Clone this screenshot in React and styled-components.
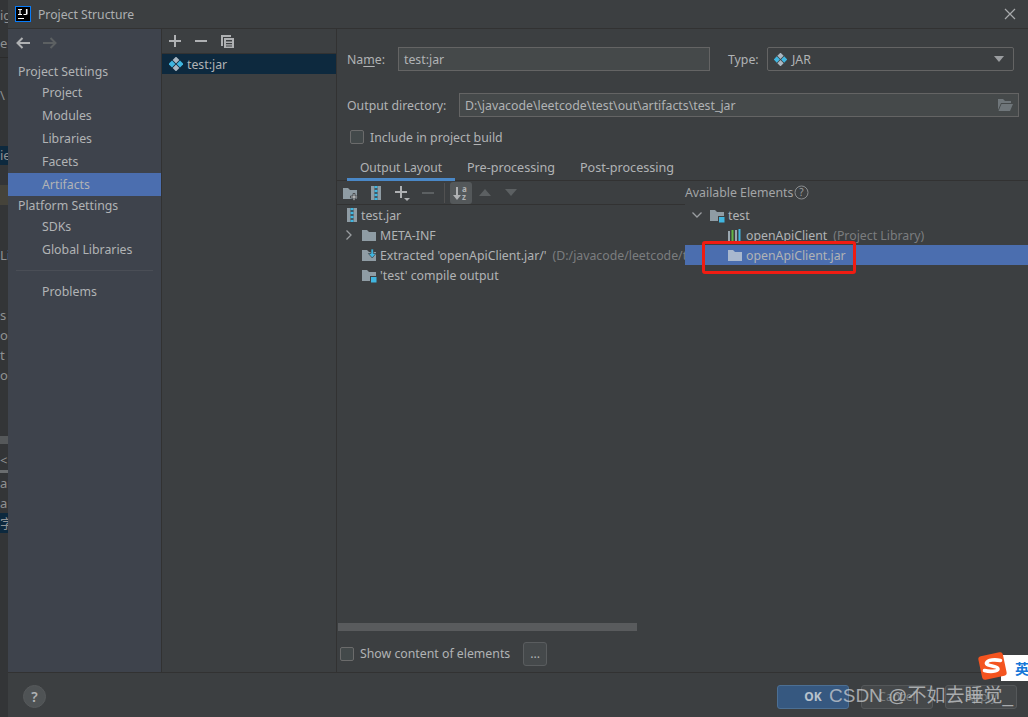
import React from 'react';
import styled, { createGlobalStyle } from 'styled-components';

const GlobalStyle = createGlobalStyle`
  html, body { margin: 0; padding: 0; background: #3c3f41; }
  * { box-sizing: border-box; }
  svg { flex: none; }
`;

const Page = styled.div`
  position: relative;
  width: 1028px;
  height: 717px;
  overflow: hidden;
  display: flex;
  font-family: "Noto Sans", "Noto Sans CJK SC", sans-serif;
  font-size: 12.3px;
  color: #b1b3b5;
  background: #3c3f41;
`;

const Strip = styled.div`
  width: 8px;
  flex: none;
  display: flex;
  flex-direction: column;
  background: #333537;
  overflow: hidden;
  font-size: 13px;
  color: #8f9193;
`;

const StripRow = styled.div`
  height: ${p => p.$h}px;
  flex: none;
  line-height: ${p => p.$h}px;
  white-space: nowrap;
  background: ${p => p.$bg || 'transparent'};
`;

const Dialog = styled.div`
  flex: 1;
  min-width: 0;
  display: flex;
  flex-direction: column;
`;

const TitleBar = styled.div`
  height: 29px;
  flex: none;
  display: flex;
  align-items: center;
  padding: 0 12px 0 7px;
  border-bottom: 1px solid #323232;
  color: #adafb1;
`;

const Title = styled.span`
  margin-left: 7px;
  flex: 1;
  font-size: 12.2px;
`;

const Body = styled.div`
  flex: 1;
  min-height: 0;
  display: flex;
`;

const Sidebar = styled.div`
  width: 153px;
  flex: none;
  background: #3e434c;
  display: flex;
  flex-direction: column;
`;

const NavBar = styled.div`
  height: 27px;
  flex: none;
  display: flex;
  align-items: center;
  gap: 13px;
  padding-left: 8px;
`;

const SideHeading = styled.div`
  height: ${p => p.$h}px;
  flex: none;
  padding: ${p => p.$pad || 0}px 0 0 10px;
  line-height: ${p => p.$h - (p.$pad || 0)}px;
`;

const SideItem = styled.div`
  height: 23px;
  flex: none;
  padding-left: 34px;
  line-height: 23px;
  background: ${p => (p.$active ? '#4b6eaf' : 'transparent')};
`;

const SideSeparator = styled.div`
  height: 1px;
  flex: none;
  margin: 9px 8px;
  background: #4a4e56;
`;

const ListPanel = styled.div`
  width: 176px;
  flex: none;
  display: flex;
  flex-direction: column;
  border-left: 1px solid #323232;
  border-right: 1px solid #323232;
`;

const ListToolbar = styled.div`
  height: 25px;
  flex: none;
  display: flex;
  align-items: center;
  gap: 10px;
  padding-left: 5px;
  border-bottom: 1px solid #323232;
`;

const ListRow = styled.div`
  height: 20px;
  flex: none;
  display: flex;
  align-items: center;
  gap: 4px;
  padding-left: 7px;
  background: #0d293e;
`;

const Editor = styled.div`
  flex: 1;
  min-width: 0;
  display: flex;
  flex-direction: column;
`;

const FormRow = styled.div`
  height: 24px;
  flex: none;
  display: flex;
  align-items: center;
  margin-top: ${p => p.$top}px;
  padding-left: 10px;
`;

const FieldLabel = styled.span`
  width: ${p => p.$w}px;
  flex: none;
  margin-left: ${p => p.$left || 0}px;
`;

const Input = styled.div`
  width: ${p => p.$w}px;
  height: 24px;
  flex: none;
  display: flex;
  align-items: center;
  justify-content: space-between;
  padding: 0 5px;
  background: #45494a;
  border: 1px solid #646464;
`;

const Combo = styled.div`
  width: 247px;
  height: 24px;
  flex: none;
  display: flex;
  align-items: center;
  gap: 5px;
  padding: 0 9px 0 6px;
  background: #3c3f41;
  border: 1px solid #646464;
  border-radius: 2px;
`;

const ComboCaret = styled.span`
  margin-left: auto;
  width: 0;
  height: 0;
  border-left: 5px solid transparent;
  border-right: 5px solid transparent;
  border-top: 6px solid #9a9da0;
`;

const Mnemonic = styled.span`
  text-decoration: underline;
  text-underline-offset: 2px;
`;

const Box = styled.span`
  width: 14px;
  height: 14px;
  flex: none;
  background: #43494a;
  border: 1px solid #6b6b6b;
  border-radius: 2px;
`;

const CheckRow = styled.div`
  height: 14px;
  flex: none;
  display: flex;
  align-items: center;
  gap: 6px;
  margin: ${p => p.$margin};
`;

const TabBar = styled.div`
  height: 30px;
  flex: none;
  display: flex;
  margin-top: 7px;
  padding-left: 10px;
  border-bottom: 1px solid #323232;
`;

const Tab = styled.div`
  width: ${p => p.$w}px;
  text-align: center;
  line-height: 33px;
  font-size: ${p => (p.$active ? 12.1 : 12.6)}px;
  border-bottom: ${p => (p.$active ? '3px solid #4a88c7' : 'none')};
  margin-bottom: -1px;
`;

const Split = styled.div`
  flex: 1;
  min-height: 0;
  display: flex;
`;

const LeftPane = styled.div`
  width: 348px;
  flex: none;
  display: flex;
  flex-direction: column;
`;

const RightPane = styled.div`
  flex: 1;
  min-width: 0;
  display: flex;
  flex-direction: column;
`;

const Toolbar = styled.div`
  height: 24px;
  flex: none;
  display: flex;
  align-items: center;
  border-bottom: 1px solid #323232;
`;

const ToolSlot = styled.span`
  width: ${p => p.$w || 26}px;
  height: 22px;
  flex: none;
  display: flex;
  align-items: center;
  justify-content: center;
  border-radius: 3px;
  background: ${p => (p.$on ? '#54585a' : 'transparent')};
`;

const ToolSep = styled.span`
  width: 1px;
  height: 20px;
  flex: none;
  margin: 0 5px 0 3px;
  background: #515151;
`;

const Tree = styled.div`
  flex: 1;
  min-height: 0;
  overflow: hidden;
`;

const TreeRow = styled.div`
  height: 20px;
  display: flex;
  align-items: center;
  gap: 3px;
  padding-left: ${p => p.$indent}px;
  white-space: nowrap;
  overflow: hidden;
  background: ${p => (p.$selected ? '#4b6eaf' : 'transparent')};
`;

const Hint = styled.span`
  color: #7b7d7f;
  margin-left: 3px;
`;

const Twisty = styled.span`
  width: 15px;
  flex: none;
  display: flex;
`;

const HScroll = styled.div`
  height: 8px;
  width: 299px;
  flex: none;
  margin-left: 1px;
  background: #595b5d;
`;

const BottomRow = styled.div`
  height: 41px;
  flex: none;
  display: flex;
  align-items: center;
  padding: 4px 0 0 3px;
  gap: 6px;
`;

const MoreButton = styled.span`
  width: 24px;
  height: 24px;
  margin-left: 7px;
  display: flex;
  align-items: center;
  justify-content: center;
  background: #45494b;
  border: 1px solid #5a5d5f;
  border-radius: 3px;
`;

const PaneHeading = styled.div`
  height: 24px;
  flex: none;
  display: flex;
  align-items: center;
  gap: 1px;
  padding-bottom: 2px;
  color: #a3a5a7;
`;

const Footer = styled.div`
  height: 45px;
  flex: none;
  display: flex;
  align-items: center;
  padding: 3px 11px 0 15px;
  gap: 12px;
  border-top: 1px solid #323232;
`;

const HelpButton = styled.span`
  width: 23px;
  height: 23px;
  margin-right: auto;
  border-radius: 50%;
  display: flex;
  align-items: center;
  justify-content: center;
  background: #4f5355;
  border: 1px solid #56595b;
  font-weight: 600;
  font-size: 14px;
`;

const DialogButton = styled.span`
  width: 72px;
  height: 24px;
  display: flex;
  align-items: center;
  justify-content: center;
  border-radius: 3px;
  font-size: 12px;
  border: 1px solid ${p => (p.$primary ? '#4c6f93' : '#55585a')};
  background: ${p => (p.$primary ? '#365880' : '#45484a')};
  color: ${p => (p.$primary ? '#b8c2cc' : '#787c7e')};
  font-weight: ${p => (p.$primary ? 700 : 400)};
`;

const RedMark = styled.div`
  position: absolute;
  left: 702px;
  top: 241px;
  width: 154px;
  height: 33px;
  border: 3px solid #f01c12;
  border-radius: 3px;
`;

const Watermark = styled.div`
  position: absolute;
  left: 829px;
  top: 682px;
  font-family: "Liberation Sans", "Noto Sans CJK SC", sans-serif;
  font-size: 19px;
  line-height: 28px;
  white-space: nowrap;
  color: rgba(208, 210, 212, 0.72);
`;

const ImeBadge = styled.div`
  position: absolute;
  left: 977px;
  top: 651px;
  width: 51px;
  height: 30px;
`;

const ImeTail = styled.div`
  position: absolute;
  left: 24px;
  top: 4px;
  width: 27px;
  height: 26px;
  padding-left: 14px;
  background: #ffffff;
  color: #1677d8;
  font-family: "Noto Sans CJK SC", sans-serif;
  font-size: 14px;
  font-weight: 700;
  line-height: 26px;
  overflow: hidden;
`;

const ArtifactIcon = ({ size = 14 }) => (
  <svg width={size} height={size} viewBox="0 0 14 14">
    <rect x="4.6" y="0.6" width="4.8" height="4.8" transform="rotate(45 7 3)" fill="#a9b7c2" />
    <rect x="0.6" y="4.6" width="4.8" height="4.8" transform="rotate(45 3 7)" fill="#40b6e0" />
    <rect x="8.6" y="4.6" width="4.8" height="4.8" transform="rotate(45 11 7)" fill="#40b6e0" />
    <rect x="4.6" y="8.6" width="4.8" height="4.8" transform="rotate(45 7 11)" fill="#a9b7c2" />
  </svg>
);

const FolderIcon = ({ color = '#8f9ca4', badge }) => (
  <svg width="16" height="16" viewBox="0 0 16 16">
    <path d="M1 3h5l2 2h7v9H1z" fill={color} />
    {badge === 'module' && <rect x="9.5" y="9.5" width="6.5" height="6.5" fill="#40b6e0" stroke="#3c3f41" />}
    {badge === 'extract' && (
      <path d="M10 2h2.4v4.5H15L11.2 11 7.4 6.5H10z" fill="#40b6e0" stroke="#3c3f41" strokeWidth="0.7" />
    )}
    {badge === 'add' && (
      <path d="M11 8.5h2V11h2.5v2H13v2.5h-2V13H8.5v-2H11z" fill="#afb1b3" stroke="#3c3f41" strokeWidth="0.8" />
    )}
  </svg>
);

const JarIcon = () => (
  <svg width="12" height="16" viewBox="0 0 12 16">
    <path d="M1 1h3.5v14H1zM7.500 1H11v14H7.500z" fill="#8f9ca4" />
    <path d="M4.5 1h3v2h-3zM4.5 5h3v2h-3zM4.5 9h3v2h-3zM4.5 13h3v2h-3z" fill="#40b6e0" />
    <path d="M5.5 3h1v2h-1zM5.5 7h1v2h-1zM5.5 11h1v2h-1z" fill="#2c7fa0" />
  </svg>
);

const LibraryIcon = () => (
  <svg width="16" height="16" viewBox="0 0 16 16">
    <path d="M1 4h2v10H1zM8 3h2v11H8z" fill="#9aa7b0" />
    <path d="M4.5 3h2v11h-2z" fill="#62b543" />
    <path d="M11.5 2h2v12h-2z" fill="#40b6e0" />
  </svg>
);

const Plus = ({ color = '#afb1b3', caret }) => (
  <svg width="16" height="16" viewBox="0 0 16 16">
    <path d="M7 2h2v5h5v2H9v5H7V9H2V7h5z" fill={color} transform={caret ? 'translate(-1 -1)' : undefined} />
    {caret && <path d="M10 13h6l-3 3z" fill={color} />}
  </svg>
);

const Minus = ({ color = '#afb1b3' }) => (
  <svg width="16" height="16" viewBox="0 0 16 16">
    <path d="M2 7h12v2H2z" fill={color} />
  </svg>
);

const CopyIcon = () => (
  <svg width="16" height="16" viewBox="0 0 16 16" fill="#afb1b3">
    <path d="M2 2h10v2H4v9H2z" />
    <path d="M5 5h10v10H5zM7 7v1.5h6V7zm0 3v1.2h6V10zm0 2.5v1h6v-1z" fillRule="evenodd" />
  </svg>
);

const Arrow = ({ color, flip }) => (
  <svg width="14" height="12" viewBox="0 0 14 12" style={flip ? { transform: 'scaleX(-1)' } : undefined}>
    <path d="M6.5 1 1.5 6l5 5M2 6h12" fill="none" stroke={color} strokeWidth="2" />
  </svg>
);

const CloseIcon = () => (
  <svg width="12" height="12" viewBox="0 0 12 12">
    <path d="M1 1l10 10M11 1 1 11" stroke="#a8aaac" strokeWidth="1.2" />
  </svg>
);

const AppLogo = () => (
  <svg width="16" height="16" viewBox="0 0 16 16">
    <rect x="0.5" y="0.5" width="15" height="15" fill="#000000" stroke="#087cfa" />
    <path d="M3 3h4v1H5.6v4H7v1H3V8h1.4V4H3zM8 3h4.5v5.2L11 9H8.5V8h2.4V3H8z" fill="#ffffff" />
    <rect x="3" y="12" width="6" height="1" fill="#ffffff" />
  </svg>
);

const Chevron = ({ down }) => (
  <svg width="12" height="12" viewBox="0 0 12 12">
    <path d={down ? 'M1.5 3.5 6 8l4.5-4.5' : 'M3.5 1.5 8 6l-4.5 4.5'} fill="none" stroke="#9a9da0" strokeWidth="1.3" />
  </svg>
);

const OpenFolder = () => (
  <svg width="16" height="14" viewBox="0 0 16 14">
    <path d="M1 1h5l2 2h6v2H4L1 12z" fill="#6f767a" />
    <path d="M4.5 6H16l-3 7H1.5z" fill="#6f767a" />
  </svg>
);

const SortIcon = () => (
  <svg width="18" height="18" viewBox="0 0 18 18">
    <path d="M4 3h2v8h3l-4 5-4-5h3z" fill="#afb1b3" />
    <text x="10" y="8" fontSize="8" fontWeight="700" fill="#afb1b3" fontFamily="Noto Sans">a</text>
    <text x="10" y="16" fontSize="8" fontWeight="700" fill="#afb1b3" fontFamily="Noto Sans">z</text>
  </svg>
);

const Triangle = ({ up }) => (
  <svg width="14" height="8" viewBox="0 0 14 8">
    <path d={up ? 'M7 0l6 7H1z' : 'M1 0h12L7 7z'} fill="#5c6062" />
  </svg>
);

const HelpSmall = () => (
  <svg width="15" height="15" viewBox="0 0 15 15">
    <circle cx="7.5" cy="7.5" r="6.5" fill="none" stroke="#8a8d8f" />
    <text x="7.5" y="11" textAnchor="middle" fontSize="10" fill="#9a9da0" fontFamily="Noto Sans">?</text>
  </svg>
);

const SogouLogo = () => (
  <svg width="32" height="30" viewBox="0 0 32 30" style={{ position: 'absolute', left: 0, top: 0, zIndex: 1 }}>
    <rect x="3" y="3" width="25" height="24" rx="3" transform="rotate(-12 15.5 15)" fill="#f4541f" />
    <path d="M23.5 9.5c-5-1-13-1-14 2.5-.8 3.500 12 2.500 11.500 6-.4 2.500-8 3-13.500 1.500" fill="none" stroke="#ffffff" strokeWidth="3.6" strokeLinecap="round" />
  </svg>
);

const stripRows = [
  { h: 6 }, { h: 18, text: 'ig' }, { h: 10 }, { h: 18, text: 'er' }, { h: 5 },
  { h: 1, bg: '#2b2b2b' }, { h: 28 }, { h: 18, text: '\\' }, { h: 42 },
  { h: 19, text: 'ie', bg: '#0d293e' }, { h: 20 }, { h: 20, bg: '#45433a' }, { h: 41 },
  { h: 18, text: 'Li' }, { h: 43 }, { h: 16, text: 's' }, { h: 4 }, { h: 16, text: 'og' },
  { h: 4 }, { h: 16, text: 't' }, { h: 4 }, { h: 16, text: 'or' }, { h: 53 },
  { h: 8, bg: '#55585a' }, { h: 8 }, { h: 16, text: '<' }, { h: 2 }, { h: 3, bg: '#6a6d6f' },
  { h: 2 }, { h: 16, text: 'ai' }, { h: 4 }, { h: 16, text: 'a' }, { h: 2 },
  { h: 20, text: '字', bg: '#0d293e' },
];

const App = () => (
  <Page>
    <GlobalStyle />
    <Strip>
      {stripRows.map((r, i) => (
        <StripRow key={i} $h={r.h} $bg={r.bg}>{r.text}</StripRow>
      ))}
    </Strip>
    <Dialog>
      <TitleBar>
        <AppLogo />
        <Title>Project Structure</Title>
        <CloseIcon />
      </TitleBar>
      <Body>
        <Sidebar>
          <NavBar>
            <Arrow color="#afb1b3" />
            <Arrow color="#5c6062" flip />
          </NavBar>
          <SideHeading $h={25} $pad={7}>Project Settings</SideHeading>
          <SideItem>Project</SideItem>
          <SideItem>Modules</SideItem>
          <SideItem>Libraries</SideItem>
          <SideItem>Facets</SideItem>
          <SideItem $active>Artifacts</SideItem>
          <SideHeading $h={19}>Platform Settings</SideHeading>
          <SideItem>SDKs</SideItem>
          <SideItem>Global Libraries</SideItem>
          <SideSeparator />
          <SideItem>Problems</SideItem>
        </Sidebar>
        <ListPanel>
          <ListToolbar>
            <Plus />
            <Minus />
            <CopyIcon />
          </ListToolbar>
          <ListRow>
            <ArtifactIcon />
            test:jar
          </ListRow>
        </ListPanel>
        <Editor>
          <FormRow $top={18}>
            <FieldLabel $w={51}>Na<Mnemonic>m</Mnemonic>e:</FieldLabel>
            <Input $w={312}>test:jar</Input>
            <FieldLabel $w={39} $left={18}>Type:</FieldLabel>
            <Combo>
              <ArtifactIcon size={13} />
              JAR
              <ComboCaret />
            </Combo>
          </FormRow>
          <FormRow $top={22}>
            <FieldLabel $w={112}>Output directory:</FieldLabel>
            <Input $w={560}>
              {'D:\\javacode\\leetcode\\test\\out\\artifacts\\test_jar'}
              <OpenFolder />
            </Input>
          </FormRow>
          <CheckRow $margin="13px 0 0 13px">
            <Box />
            <span>Include in project <Mnemonic>b</Mnemonic>uild</span>
          </CheckRow>
          <TabBar>
            <Tab $active $w={108}>Output Layout</Tab>
            <Tab $w={112}>Pre-processing</Tab>
            <Tab $w={120}>Post-processing</Tab>
          </TabBar>
          <Split>
            <LeftPane>
              <Toolbar>
                <ToolSlot><FolderIcon badge="add" /></ToolSlot>
                <ToolSlot><JarIcon /></ToolSlot>
                <ToolSlot><Plus caret /></ToolSlot>
                <ToolSlot><Minus color="#5c6062" /></ToolSlot>
                <ToolSep />
                <ToolSlot $on $w={22}><SortIcon /></ToolSlot>
                <ToolSlot><Triangle up /></ToolSlot>
                <ToolSlot><Triangle /></ToolSlot>
              </Toolbar>
              <Tree>
                <TreeRow $indent={9}><JarIcon />test.jar</TreeRow>
                <TreeRow $indent={6}><Twisty><Chevron /></Twisty><FolderIcon />META-INF</TreeRow>
                <TreeRow $indent={24}><FolderIcon badge="extract" />Extracted 'openApiClient.jar/'<Hint>(D:/javacode/leetcode/test/out/lib)</Hint></TreeRow>
                <TreeRow $indent={24}><FolderIcon badge="module" />'test' compile output</TreeRow>
              </Tree>
              <HScroll />
              <BottomRow>
                <Box />
                Show content of elements
                <MoreButton>...</MoreButton>
              </BottomRow>
            </LeftPane>
            <RightPane>
              <PaneHeading>Available Elements<HelpSmall /></PaneHeading>
              <Tree>
                <TreeRow $indent={6}><Twisty><Chevron down /></Twisty><FolderIcon badge="module" />test</TreeRow>
                <TreeRow $indent={42}><LibraryIcon />openApiClient<Hint>(Project Library)</Hint></TreeRow>
                <TreeRow $indent={42} $selected><FolderIcon color="#a9b8ce" />openApiClient.jar</TreeRow>
              </Tree>
            </RightPane>
          </Split>
        </Editor>
      </Body>
      <Footer>
        <HelpButton>?</HelpButton>
        <DialogButton $primary>OK</DialogButton>
        <DialogButton>Cancel</DialogButton>
        <DialogButton>Apply</DialogButton>
      </Footer>
    </Dialog>
    <RedMark />
    <ImeBadge>
      <SogouLogo />
      <ImeTail>英</ImeTail>
    </ImeBadge>
    <Watermark>CSDN @不如去睡觉_</Watermark>
  </Page>
);

export default App;
